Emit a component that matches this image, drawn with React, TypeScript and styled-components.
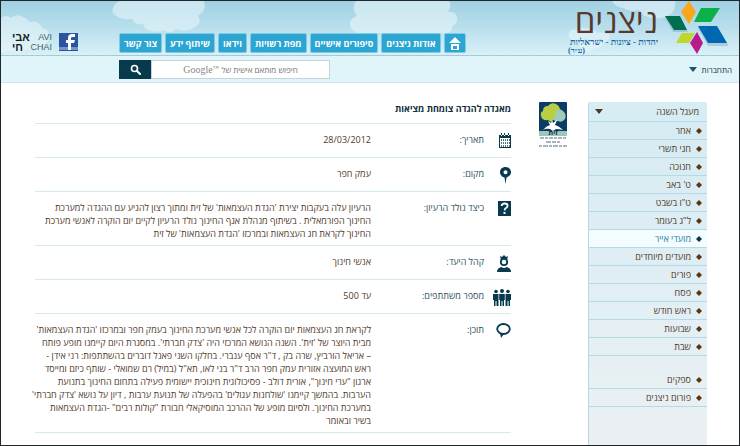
import React from "react";
import styled, { createGlobalStyle } from "styled-components";

const GlobalStyle = createGlobalStyle`
  * { box-sizing: border-box; }
  body { margin: 0; background: #fff; font-family: "Open Sans", "Liberation Sans", Arial, sans-serif; }
  button, input { font-family: inherit; }
`;

const Page = styled.div`
  display: flex;
  flex-direction: column;
  min-height: 100vh;
  border: 1px solid #22252a;
  background: #fff;
  color: #523a2a;
  font-size: 9px;
  line-height: 13px;
`;

const Header = styled.header`
  position: relative;
  display: flex;
  align-items: flex-end;
  height: 55px;
  padding: 0 11px;
  background: linear-gradient(#a0d1e3, #b9dfec 50%, #d9f0f7);
  border-bottom: 1px dashed #a9c6cf;
`;

const Sky = styled.svg`
  position: absolute;
  inset: 0;
  width: 100%;
  height: 100%;
`;

const Brand = styled.a`
  position: relative;
  display: flex;
  align-self: flex-start;
  gap: 4px;
  color: #1767a3;
  text-decoration: none;
`;

const BrandText = styled.span`
  display: flex;
  flex-direction: column;
  align-items: flex-start;
  width: 90px;
  padding-top: 3px;
  font-family: "Liberation Serif", "Times New Roman", serif;
`;

const BrandName = styled.strong`
  color: #56392f;
  font-family: "Open Sans", sans-serif;
  font-size: 33px;
  font-weight: 500;
  line-height: 34px;
  white-space: nowrap;
`;

const Tagline = styled.span`
  font-size: 9px;
  font-weight: 700;
  line-height: 9px;
  white-space: nowrap;
`;

const TaglineEnd = styled(Tagline)`
  align-self: flex-end;
  font-size: 8px;
  line-height: 8px;
`;

const Nav = styled.nav`
  position: relative;
  display: flex;
  gap: 3px;
  margin-inline-start: auto;
  margin-inline-end: 41px;
  padding-bottom: 2px;
`;

const NavLink = styled.a`
  display: flex;
  align-items: center;
  justify-content: center;
  height: 20px;
  padding: 0 4px;
  border: 1px solid #7fcbe5;
  border-radius: 2px;
  background: #2ba5d2;
  color: #fff;
  font-weight: 700;
  text-decoration: none;
  white-space: nowrap;
`;

const HomeLink = styled(NavLink)`
  width: 22px;
  padding: 0;
`;

const Partners = styled.div`
  position: relative;
  display: flex;
  align-items: center;
  gap: 7px;
  padding-bottom: 3px;
`;

const IconLink = styled.a`
  display: flex;
`;

const AviChai = styled.a`
  display: grid;
  grid-template-columns: 18px 22px;
  align-items: center;
  direction: ltr;
  color: #41695f;
  font-family: "Liberation Sans", sans-serif;
  font-size: 9px;
  line-height: 10px;
  text-decoration: none;
`;

const AviHebrew = styled.span`
  color: #12211f;
  font-size: 11px;
  font-weight: 700;
  text-align: left;
`;

const AviLatin = styled.span`
  text-align: right;
`;

const Bar = styled.div`
  display: flex;
  align-items: center;
  justify-content: space-between;
  height: 27px;
  padding-inline: 7px 118px;
  background: #e0f5fa;
  border-bottom: 1px solid #d5e2e5;
`;

const Login = styled.button`
  display: flex;
  align-items: center;
  gap: 5px;
  padding: 0;
  border: 0;
  background: none;
  color: #17303c;
  font-size: 8px;
  cursor: pointer;
`;

const Search = styled.form`
  display: flex;
  height: 19px;
  width: 211px;
`;

const SearchField = styled.div`
  display: grid;
  flex: 1;
  min-width: 0;
  border: 1px solid #c3d6db;
  background: #fff;
  > * { grid-area: 1 / 1; }
`;

const SearchInput = styled.input`
  width: 100%;
  min-width: 0;
  padding: 0 6px;
  border: 0;
  background: transparent;
  font-size: 9px;
`;

const SearchHint = styled.label`
  display: flex;
  align-items: center;
  justify-content: center;
  gap: 3px;
  color: #6f7374;
  font-size: 8px;
  white-space: nowrap;
`;

const Google = styled.span`
  display: flex;
  color: #85898b;
  font-family: "Liberation Serif", serif;
  font-size: 10px;
`;

const Mark = styled.small`
  font-size: 6px;
  line-height: 10px;
`;

const SearchButton = styled.button`
  display: grid;
  place-items: center;
  width: 32px;
  padding: 0;
  border: 0;
  background: #073a4d;
  cursor: pointer;
`;

const Body = styled.main`
  display: flex;
  flex: 1;
  align-items: flex-start;
  padding-top: 19px;
  padding-inline: 32px 34px;
`;

const Side = styled.nav`
  flex: none;
  align-self: stretch;
  width: 119px;
  border-radius: 3px 3px 0 0;
  border-left: 1px solid #b5d8e3;
  background: linear-gradient(#d5ebf2, #e2eff4 60%, #ebf0f2);
`;

const SideHead = styled.button`
  display: flex;
  align-items: center;
  justify-content: space-between;
  width: 100%;
  height: 20px;
  padding: 0 8px 0 6px;
  border: 0;
  border-bottom: 1px solid #b5dae5;
  border-radius: 3px 3px 0 0;
  background: #d5edf3;
  color: #523a2a;
  font-size: 9px;
  cursor: pointer;
`;

const SideList = styled.ul`
  margin: 0;
  padding: 0;
  list-style: none;
  & + & { margin-top: 15px; }
`;

const SideLink = styled.a<{ $active?: boolean }>`
  display: flex;
  align-items: center;
  gap: 5px;
  height: 18px;
  padding: 0 5px;
  border-bottom: 1px solid #b5dae5;
  background: ${(p) => (p.$active ? "#f3fcfe" : "transparent")};
  color: ${(p) => (p.$active ? "#287f9f" : "#523a2a")};
  text-decoration: none;
  > svg { color: ${(p) => (p.$active ? "#073a4d" : "#5b3510")}; }
`;

const Sponsor = styled.a`
  flex: none;
  display: flex;
  flex-direction: column;
  width: 28px;
  margin-inline: 21px 28px;
  text-decoration: none;
`;

const Article = styled.article`
  flex: 1;
  min-width: 0;
`;

const Title = styled.h1`
  height: 22px;
  margin: 0;
  border-bottom: 1px solid #d5ebea;
  color: #12303d;
  font-size: 9px;
  font-weight: 700;
  line-height: 14px;
`;

const Details = styled.dl`
  margin: 0;
`;

const Row = styled.div`
  display: grid;
  grid-template-columns: 27px 113px 1fr;
  min-height: 34px;
  padding: 9px 0 5px;
  border-bottom: 1px solid #d5ebea;
`;

const Label = styled.dt`
  color: #2d5061;
`;

const Value = styled.dd`
  margin: 0;
  white-space: pre;
`;

const navItems = ["אודות ניצנים", "סיפורים אישיים", "מפת רשויות", "וידאו", "שיתוף ידע", "צור קשר"];
const yearItems = [
  "אחר", "חגי תשרי", "חנוכה", "ט' באב", "ט\"ו בשבט", "ל\"ג בעומר", "מועדי אייר",
  "מועדים מיוחדים", "פורים", "פסח", "ראש חודש", "שבועות", "שבת",
];
const moreItems = ["ספקים", "פורום ניצנים"];

const Clouds = () => (
  <Sky viewBox="0 0 738 54" preserveAspectRatio="xMaxYMin slice" aria-hidden="true">
    <g fill="#ecf7fb" opacity=".55">
      <path d="M0 17q5-4 10 0 5-5 12-1 5 2 6 5 11-2 13 6 8 1 6 9 1 8-8 9l-5 4-9-1-8 4-7-2-10 1z" />
      <path d="M119 0h84q3 10-6 15 5 7-3 11-8 6-19 2-5 6-12 1-6 3-11 1-8 0-10-7-8 2-11-5-9 1-14-2-8-4-5-9 1-5 7-7" />
      <path d="M355 0h93q3 5-1 11 10-1 9 8 0 5-5 6 1 5-4 7H362q-8 1-12-5-4-8 6-12-6-8-1-15" />
      <path d="M611 0h63q2 11-8 15-9 4-19 1-7-2-8-7-12 2-16-2-9-1-12-7" />
      <path d="M568 31q3-4 9-2 4-4 12-1 6 0 7 4 9-2 13 3-1 5-7 7-2 6-10 6-4 4-10 1-4-3-3-7-13-2-11-11" />
    </g>
  </Sky>
);

const Star = () => (
  <svg width="66" height="54" viewBox="0 0 66 54" aria-hidden="true">
    <g opacity=".18" fill="#174f78" transform="translate(1 2)">
      <path d="M2 15h16l7 14H10zM35 25h20l11 18H45z" />
    </g>
    <path fill="#faa61a" d="M27 0l7 11-7 12-8-12z" />
    <path fill="#0daf4b" d="M39 7h19l-9 14H32z" />
    <path fill="#006f4f" d="M3 15h15l7 14H12z" />
    <path fill="#0068b3" d="M36 25h19l10 17H46z" />
    <path fill="#bdd72d" d="M20 32h13l-6 10H14z" />
    <path fill="#b91b8d" d="M35 31l6 11-6 11-7-11z" />
  </svg>
);

const Caret = ({ color }: { color: string }) => (
  <svg width="8" height="5" viewBox="0 0 8 5" fill={color} aria-hidden="true">
    <path d="M0 0h8L4 5z" />
  </svg>
);

const Bullet = () => (
  <svg width="6" height="6" viewBox="0 0 6 6" fill="currentColor" aria-hidden="true">
    <path d="M3 0l3 3-3 3-3-3z" />
  </svg>
);

const HomeIcon = () => (
  <svg width="12" height="13" viewBox="0 0 12 13" aria-hidden="true">
    <path fill="#fff" fillRule="evenodd" d="M6 0l6 6H0zM2 7h8v6H2zm2 2v3h4V9z" />
  </svg>
);

const FacebookIcon = () => (
  <svg width="19" height="18" viewBox="0 0 19 18" aria-hidden="true">
    <path fill="#29559f" d="M0 0h19v18H0z" />
    <path fill="#7394c8" d="M0 14h19v3H0z" />
    <path fill="#fff" d="M9 17v-7H7V7h2V5q0-4 4-4h3v3h-2q-2 0-2 1v2h4l-1 3h-3v7z" />
  </svg>
);

const SearchIcon = () => (
  <svg width="11" height="11" viewBox="0 0 11 11" fill="none" stroke="#fff" aria-hidden="true">
    <circle cx="4.5" cy="4.5" r="3" strokeWidth="1.6" />
    <path d="M7 7l3 3" strokeWidth="2" strokeLinecap="round" />
  </svg>
);

const TreeLogo = () => (
  <svg width="28" height="34" viewBox="0 0 28 34" aria-hidden="true">
    <rect width="28" height="34" rx="1" fill="#0c3c66" />
    <path fill="#b9cf43" d="M2 14q-1-4 2-5 0-5 5-5 3-4 8-2 4 2 4 6 0 9-7 10-2 3-5 0-6 1-7-4" />
    <path fill="#9fcbbd" d="M17 10q3-5 7-1 4 3 2 8-3 4-7 2-4 1-5-3 3-2 3-6" />
    <path fill="#fff" d="M13 18l1 3 4-3-2 5q4 1 8 5-4-1-7-1l-3 2-3-2q-4-1-7 1 3-4 7-5l-2-4 3 2z" />
    <path fill="#9bc8b9" d="M0 29h28v5H0z" />
  </svg>
);

const SponsorName = styled.span`
  margin-top: -7px;
  color: #16343d;
  font-size: 7px;
  font-weight: 700;
  line-height: 7px;
  text-align: center;
`;

const SponsorLines = () => (
  <svg width="28" height="11" viewBox="0 0 28 11" stroke="#536a83" strokeWidth="1.2" aria-hidden="true">
    <path d="M1 2h26" strokeDasharray="4 1 3 1" />
    <path d="M7 6h14" strokeDasharray="5 1 4 1" />
    <path d="M0 10h28" strokeDasharray="3 1 5 1" />
  </svg>
);

const ink = "#073a4d";

const icons = {
  calendar: (
    <svg width="12" height="15" viewBox="0 0 12 15" aria-hidden="true">
      <path fill={ink} d="M0 2h12v13H0z" />
      <path fill="#fff" d="M1 5h10v9H1zM2 1h1v2H2zM5 1h1v2H5zM9 1h1v2H9z" />
      <path stroke={ink} strokeWidth="1" strokeDasharray="2 1" d="M2.500 6v8M4.500 6v8M6.500 6v8M8.500 6v8M10.500 6v8" opacity=".7" />
      <path fill={ink} d="M2 0h1v2H2zM5 0h1v2H5zM9 0h1v2H9z" />
    </svg>
  ),
  pin: (
    <svg width="11" height="17" viewBox="0 0 11 17" aria-hidden="true">
      <path fill={ink} fillRule="evenodd" d="M5.500 0C9 0 11 2.500 11 5.200 11 8 8.500 10 6.500 10.500L5.500 17l-1-6.500C2.500 10 0 8 0 5.200 0 2.500 2 0 5.500 0zm0 3.200a2 2 0 100 4 2 2 0 000-4z" />
    </svg>
  ),
  question: (
    <svg width="13" height="15" viewBox="0 0 13 15" aria-hidden="true">
      <path fill={ink} d="M0 0h13v15H0z" />
      <path fill="none" stroke="#fff" strokeWidth="1.800" d="M3.600 5q0-2.500 3-2.500t3 2.300q0 1.400-1.600 2.200-1.400.8-1.400 2.500" />
      <path fill="#fff" d="M5.500 11h2v2h-2z" />
    </svg>
  ),
  person: (
    <svg width="14" height="17" viewBox="0 0 14 17" aria-hidden="true">
      <path fill={ink} d="M3 1l2 1 2-2 2 2 2-1-1 4H4z" />
      <circle cx="7" cy="7" r="3.200" fill="#fff" stroke={ink} strokeWidth="1.800" />
      <path fill={ink} d="M0 17q0-4 4.500-5Q7 14 9.500 12 14 13 14 17z" />
    </svg>
  ),
  people: (
    <svg width="18" height="17" viewBox="0 0 18 17" fill={ink} aria-hidden="true">
      <circle cx="3" cy="2.500" r="1.800" />
      <circle cx="9" cy="2" r="2" />
      <circle cx="15" cy="2.500" r="1.800" />
      <path d="M0 5h5.500v12H3.500v-5h-1v5H1v-6H0zM12.500 5H18v6h-1v6h-1.500v-5h-1v5h-2zM6.200 5h5.600v6H11v6H9.500v-5h-1v5H7v-6h-.8z" />
    </svg>
  ),
  bubble: (
    <svg width="15" height="15" viewBox="0 0 15 15" aria-hidden="true">
      <ellipse cx="7.500" cy="6" rx="6.300" ry="5" fill="none" stroke={ink} strokeWidth="1.800" />
      <path fill={ink} d="M4 10l4 1-3 4z" />
    </svg>
  ),
};

const rows: { icon: keyof typeof icons; label: string; value: string }[] = [
  { icon: "calendar", label: "תאריך:", value: "28/03/2012" },
  { icon: "pin", label: "מקום:", value: "עמק חפר" },
  {
    icon: "question",
    label: "כיצד נולד הרעיון:",
    value: `הרעיון עלה בעקבות יצירת 'הגדת העצמאות' של זית ומתוך רצון להגיע עם ההגדה למערכת
החינוך הפורמאלית . בשיתוף מנהלת אגף החינוך נולד הרעיון לקיים יום הוקרה לאנשי מערכת
החינוך לקראת חג העצמאות ובמרכזו 'הגדת העצמאות' של זית`,
  },
  { icon: "person", label: "קהל היעד:", value: "אנשי חינוך" },
  { icon: "people", label: "מספר משתתפים:", value: "עד 500" },
  {
    icon: "bubble",
    label: "תוכן:",
    value: `לקראת חג העצמאות יום הוקרה לכל אנשי מערכת החינוך בעמק חפר ובמרכזו 'הגדת העצמאות'
מבית היוצר של 'זית'. השנה הנושא המרכזי היה 'צדק חברתי'. במסגרת היום קיימנו מופע פותח
– אריאל הורביץ, שרה בק , ד"ר אסף ענברי. בחלקו השני פאנל דוברים בהשתתפות: רני אידן -
ראש המועצה אזורית עמק חפר הרב ד"ר בני לאו, תא"ל (במיל) רם שמואלי - שותף כיזם ומייסד
ארגון "ערי חינוך", אורית דולב - פסיכולוגית חינוכית יישומית פעילה בתחום החינוך בתנועת
הערבות. בהמשך קיימנו 'שולחנות עגולים' בהפעלה של תנועת ערבות , דיון על נושא 'צדק חברתי'
במערכת החינוך. ולסיום מופע של ההרכב המוסיקאלי חבורת "קולות רבים" -הגדת העצמאות
בשיר ובאומר`,
  },
];

const SideItems = ({ items }: { items: string[] }) => (
  <SideList>
    {items.map((item) => (
      <li key={item}>
        <SideLink href="#" $active={item === "מועדי אייר"}>
          <Bullet />
          {item}
        </SideLink>
      </li>
    ))}
  </SideList>
);

export default function App() {
  return (
    <Page dir="rtl" lang="he">
      <GlobalStyle />
      <Header>
        <Clouds />
        <Brand href="#">
          <Star />
          <BrandText>
            <BrandName>ניצנים</BrandName>
            <Tagline>יהדות - ציונות - ישראליות</Tagline>
            <TaglineEnd>(ע״ר)</TaglineEnd>
          </BrandText>
        </Brand>
        <Nav>
          <HomeLink href="#" aria-label="דף הבית"><HomeIcon /></HomeLink>
          {navItems.map((item) => (
            <NavLink href="#" key={item}>{item}</NavLink>
          ))}
        </Nav>
        <Partners>
          <IconLink href="#" aria-label="Facebook"><FacebookIcon /></IconLink>
          <AviChai href="#">
            <AviHebrew>אבי</AviHebrew>
            <AviLatin>AVI</AviLatin>
            <AviHebrew>חי</AviHebrew>
            <AviLatin>CHAI</AviLatin>
          </AviChai>
        </Partners>
      </Header>
      <Bar>
        <Login type="button">התחברות <Caret color="#14566f" /></Login>
        <Search onSubmit={(e) => e.preventDefault()}>
          <SearchField>
            <SearchHint htmlFor="search">
              חיפוש מותאם אישית של <Google dir="ltr">Google<Mark>™</Mark></Google>
            </SearchHint>
            <SearchInput id="search" type="text" />
          </SearchField>
          <SearchButton type="submit" aria-label="חיפוש"><SearchIcon /></SearchButton>
        </Search>
      </Bar>
      <Body>
        <Side>
          <SideHead type="button">מעגל השנה <Caret color="#4c3a24" /></SideHead>
          <SideItems items={yearItems} />
          <SideItems items={moreItems} />
        </Side>
        <Sponsor href="#">
          <TreeLogo />
          <SponsorName>זית</SponsorName>
          <SponsorLines />
        </Sponsor>
        <Article>
          <Title>מאגדה להגדה צומחת מציאות</Title>
          <Details>
            {rows.map((row) => (
              <Row key={row.icon}>
                {icons[row.icon]}
                <Label>{row.label}</Label>
                <Value>{row.value}</Value>
              </Row>
            ))}
          </Details>
        </Article>
      </Body>
    </Page>
  );
}
